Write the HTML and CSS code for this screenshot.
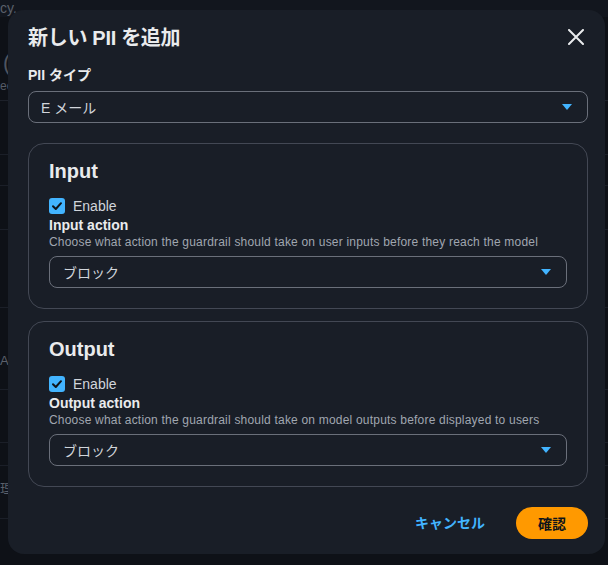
FILE: index.html
```html
<!DOCTYPE html>
<html lang="ja">
<head>
<meta charset="utf-8">
<title>新しい PII を追加</title>
<link rel="stylesheet" href="styles.css">
</head>
<body>
<div class="page">
  <div class="pg-top">cy.</div>
  <div class="pg-head">
    <div class="pg-paren">(</div>
    <div class="pg-sub">ec</div>
  </div>
  <div class="pg-row h54"></div>
  <div class="pg-row h31"></div>
  <div class="pg-row h44"></div>
  <div class="pg-row h78"></div>
  <div class="pg-row h82"><span class="pg-txt t47">A</span></div>
  <div class="pg-row h53"></div>
  <div class="pg-row h23"></div>
  <div class="pg-row h53"><span class="pg-txt t17">理</span></div>
  <div class="pg-row h49"></div>
</div>

<div class="modal" role="dialog">
  <div class="modal-header">
    <h2 class="modal-title">新しい PII を追加</h2>
    <button class="close-btn" aria-label="閉じる">
      <svg width="16" height="16" viewBox="0 0 16 16"><path d="M1 1 L15 15 M15 1 L1 15" stroke="#e9ebed" stroke-width="2" fill="none" stroke-linecap="round"/></svg>
    </button>
  </div>

  <div class="field-label">PII タイプ</div>
  <div class="select top-select">
    <span>E メール</span>
    <svg class="caret" width="10" height="6" viewBox="0 0 10 6"><path d="M0 0 H10 L5 6 Z" fill="#42b4ff"/></svg>
  </div>

  <div class="card">
    <h3 class="card-title">Input</h3>
    <label class="check-row">
      <span class="checkbox"><svg width="16" height="16" viewBox="0 0 16 16"><path d="M4 8.2 L6.8 11 L12 5.2" stroke="#0f141a" stroke-width="2" fill="none" stroke-linecap="round" stroke-linejoin="round"/></svg></span>
      <span class="check-label">Enable</span>
    </label>
    <div class="sub-label">Input action</div>
    <div class="desc">Choose what action the guardrail should take on user inputs before they reach the model</div>
    <div class="select inner-select">
      <span>ブロック</span>
      <svg class="caret" width="10" height="6" viewBox="0 0 10 6"><path d="M0 0 H10 L5 6 Z" fill="#42b4ff"/></svg>
    </div>
  </div>

  <div class="card card-second">
    <h3 class="card-title">Output</h3>
    <label class="check-row">
      <span class="checkbox"><svg width="16" height="16" viewBox="0 0 16 16"><path d="M4 8.2 L6.8 11 L12 5.2" stroke="#0f141a" stroke-width="2" fill="none" stroke-linecap="round" stroke-linejoin="round"/></svg></span>
      <span class="check-label">Enable</span>
    </label>
    <div class="sub-label">Output action</div>
    <div class="desc">Choose what action the guardrail should take on model outputs before displayed to users</div>
    <div class="select inner-select">
      <span>ブロック</span>
      <svg class="caret" width="10" height="6" viewBox="0 0 10 6"><path d="M0 0 H10 L5 6 Z" fill="#42b4ff"/></svg>
    </div>
  </div>

  <div class="modal-footer">
    <button class="btn-link">キャンセル</button>
    <button class="btn-primary">確認</button>
  </div>
</div>
</body>
</html>
```

FILE: styles.css
```css
* { box-sizing: border-box; }

html, body {
  margin: 0;
  padding: 0;
  height: 100%;
}

body {
  background: #0e1117;
  font-family: "Liberation Sans", "Noto Sans CJK JP", sans-serif;
  overflow: hidden;
}

/* dimmed page behind the modal */
.page {
  display: flex;
  flex-direction: column;
  width: 100%;
  color: #5a606b;
}
.pg-top {
  height: 17px;
  font-size: 14px;
  line-height: 16px;
  background: #12161e;
}
.pg-head {
  height: 84px;
  border-bottom: 1px solid #1d212a;
}
.pg-paren {
  font-size: 22px;
  line-height: 24px;
  margin-top: 34px;
  padding-left: 3px;
  color: #4f5560;
}
.pg-sub {
  font-size: 12px;
  line-height: 14px;
  margin-top: 4px;
  color: #555b66;
}
.pg-row {
  border-bottom: 1px solid #1b1f28;
  font-size: 13px;
}
.h54 { height: 54px; }
.h31 { height: 31px; }
.h44 { height: 44px; }
.h78 { height: 78px; }
.h82 { height: 82px; }
.h53 { height: 53px; }
.h23 { height: 23px; }
.h49 { height: 49px; }
.pg-txt { display: block; line-height: 14px; }
.t47 { padding-top: 46px; }
.t17 { padding-top: 16px; }

/* modal */
.modal {
  position: absolute;
  left: 8px;
  top: 10px;
  width: 597px;
  background: #191e27;
  border-radius: 16px;
  padding: 15px 17px 15px 20px;
  display: flex;
  flex-direction: column;
}

.modal-header {
  display: flex;
  justify-content: space-between;
  align-items: center;
  height: 24px;
}
.modal-title {
  margin: 0;
  font-size: 20px;
  line-height: 24px;
  font-weight: 700;
  color: #e9ebed;
  padding-top: 1px;
  letter-spacing: -0.3px;
}
.close-btn {
  background: none;
  border: 0;
  padding: 0;
  margin-right: 4px;
  width: 16px;
  height: 16px;
  display: flex;
}

.field-label {
  margin-top: 17px;
  font-size: 14px;
  line-height: 18px;
  font-weight: 700;
  color: #e9ebed;
}

.select {
  height: 32px;
  border: 1px solid #6a6f7a;
  border-radius: 8px;
  display: flex;
  align-items: center;
  justify-content: space-between;
  padding: 0 15px 0 12px;
  font-size: 14px;
  color: #d1d5db;
}
.top-select { margin-top: 7px; }
.inner-select { margin-top: 6px; padding-left: 13px; }
.caret { display: block; }

.card {
  margin-top: 20px;
  border: 1px solid #434854;
  border-radius: 16px;
  padding: 14px 20px 20px 20px;
  display: flex;
  flex-direction: column;
}
.card-second { margin-top: 12px; }

.card-title {
  margin: 0;
  font-size: 20px;
  line-height: 24px;
  font-weight: 700;
  color: #e9ebed;
  padding-top: 1px;
  height: 24px;
}

.check-row {
  margin-top: 14px;
  display: flex;
  align-items: center;
  height: 20px;
}
.checkbox {
  width: 16px;
  height: 16px;
  border-radius: 3px;
  background: #42b4ff;
  display: flex;
}
.check-label {
  margin-left: 8px;
  font-size: 14px;
  line-height: 20px;
  color: #d1d5db;
}

.sub-label {
  font-size: 14px;
  line-height: 18px;
  font-weight: 700;
  color: #e9ebed;
}
.desc {
  font-size: 12px;
  line-height: 16px;
  color: #a0a6b0;
  letter-spacing: 0.2px;
}

.modal-footer {
  margin-top: 20px;
  display: flex;
  justify-content: flex-end;
  align-items: center;
  gap: 31px;
}
.btn-link {
  background: none;
  border: 0;
  padding: 0;
  font-family: inherit;
  font-size: 14px;
  line-height: 18px;
  font-weight: 700;
  color: #42b4ff;
}
.btn-primary {
  height: 32px;
  width: 72px;
  border: 0;
  border-radius: 16px;
  background: #ff9900;
  color: #0f141a;
  font-family: inherit;
  font-size: 14px;
  font-weight: 700;
  padding: 0;
}
```
